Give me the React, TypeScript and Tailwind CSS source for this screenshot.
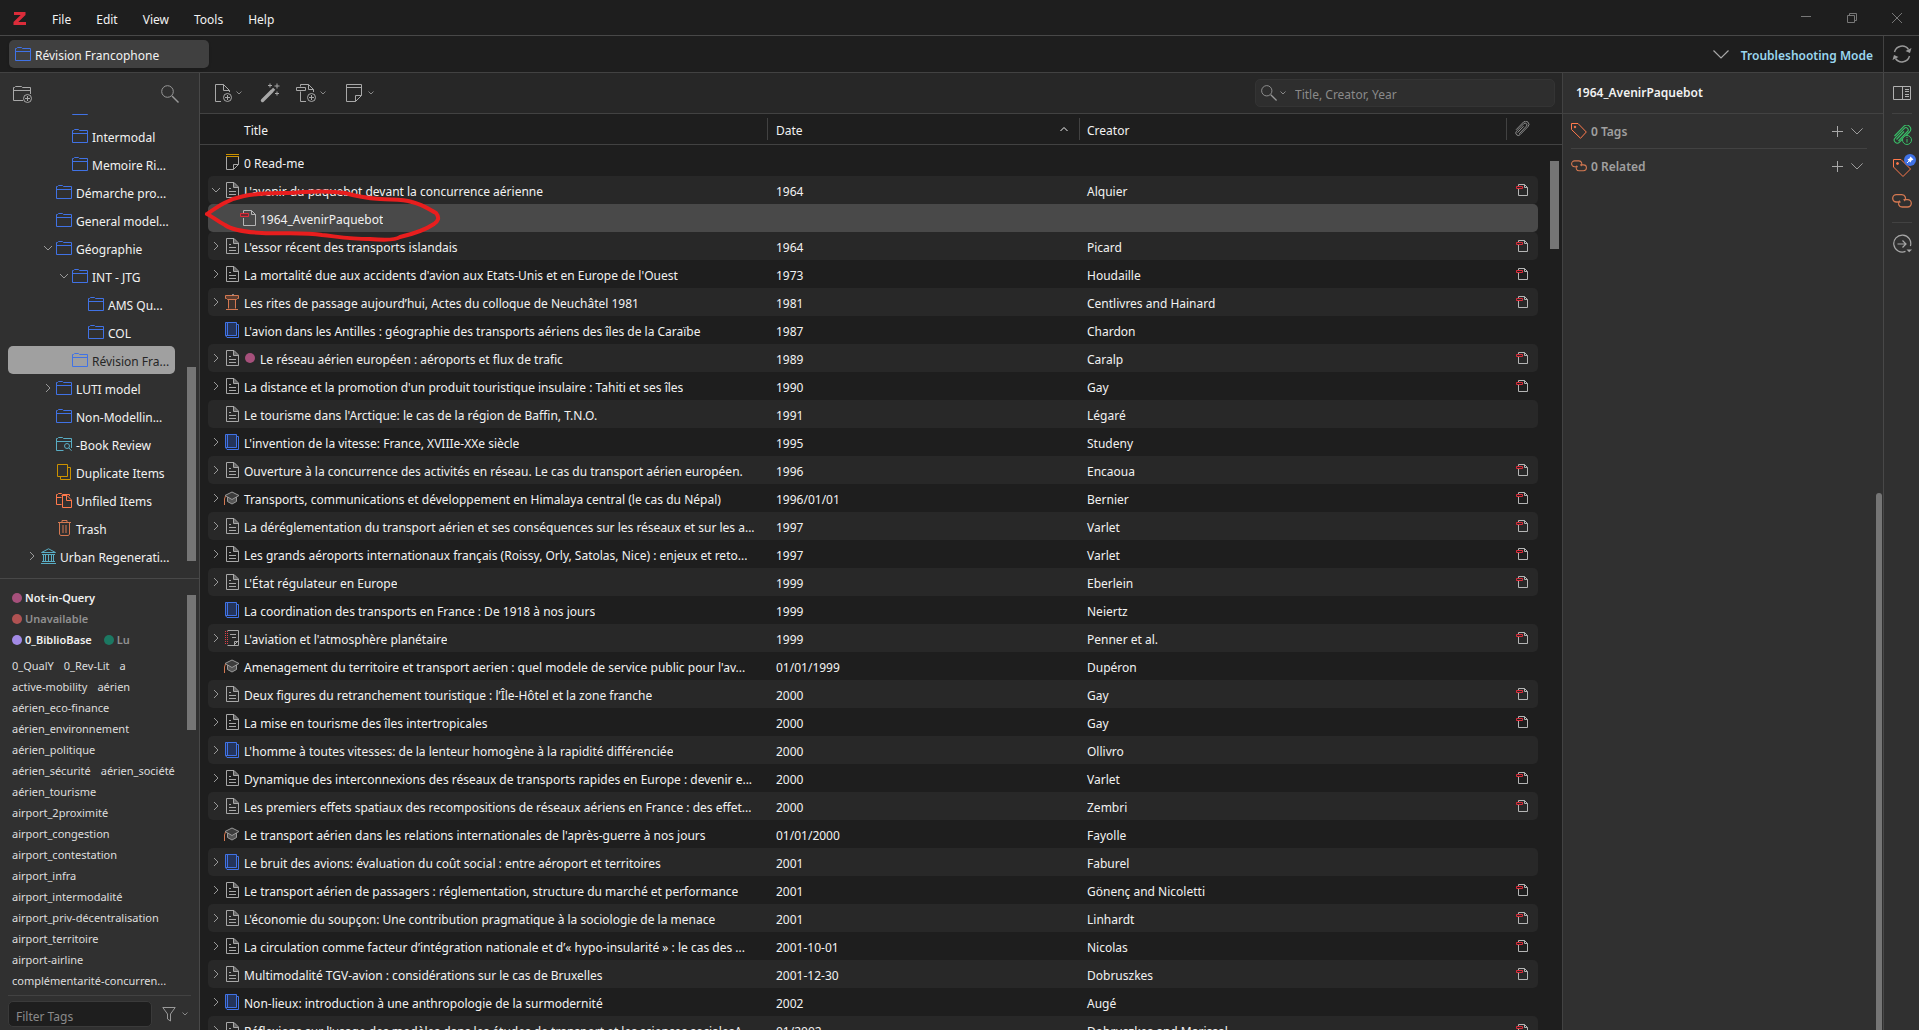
import React, { useState } from "react";
import clsx from "clsx";

type ItemType = "note" | "article" | "pdf" | "conference" | "book" | "thesis" | "report";

interface Item {
  type: ItemType;
  title: string;
  date?: string;
  creator?: string;
  expandable?: boolean;
  pdf?: boolean;
  tagged?: boolean;
}

interface Collection {
  name: string;
  depth: number;
  icon: "folder" | "search" | "duplicate" | "unfiled" | "trash" | "library";
  open?: boolean;
  closed?: boolean;
}

const collections: Collection[] = [
  { name: "Intermodal", depth: 3, icon: "folder" },
  { name: "Memoire Ri...", depth: 3, icon: "folder" },
  { name: "Démarche pro...", depth: 2, icon: "folder" },
  { name: "General model...", depth: 2, icon: "folder" },
  { name: "Géographie", depth: 2, icon: "folder", open: true },
  { name: "INT - JTG", depth: 3, icon: "folder", open: true },
  { name: "AMS Qu...", depth: 4, icon: "folder" },
  { name: "COL", depth: 4, icon: "folder" },
  { name: "Révision Fra...", depth: 3, icon: "folder" },
  { name: "LUTI model", depth: 2, icon: "folder", closed: true },
  { name: "Non-Modellin...", depth: 2, icon: "folder" },
  { name: "-Book Review", depth: 2, icon: "search" },
  { name: "Duplicate Items", depth: 2, icon: "duplicate" },
  { name: "Unfiled Items", depth: 2, icon: "unfiled" },
  { name: "Trash", depth: 2, icon: "trash" },
  { name: "Urban Regenerati...", depth: 1, icon: "library", closed: true },
];

const indents = ["pl-0", "pl-4", "pl-8", "pl-12", "pl-16"];

const items: Item[] = [
  { type: "note", title: "0 Read-me" },
  { type: "article", title: "L'avenir du paquebot devant la concurrence aérienne", date: "1964", creator: "Alquier", pdf: true },
  { type: "pdf", title: "1964_AvenirPaquebot" },
  { type: "article", title: "L'essor récent des transports islandais", date: "1964", creator: "Picard", expandable: true, pdf: true },
  { type: "article", title: "La mortalité due aux accidents d'avion aux Etats-Unis et en Europe de l'Ouest", date: "1973", creator: "Houdaille", expandable: true, pdf: true },
  { type: "conference", title: "Les rites de passage aujourd’hui, Actes du colloque de Neuchâtel 1981", date: "1981", creator: "Centlivres and Hainard", expandable: true, pdf: true },
  { type: "book", title: "L'avion dans les Antilles : géographie des transports aériens des îles de la Caraïbe", date: "1987", creator: "Chardon" },
  { type: "article", title: "Le réseau aérien européen : aéroports et flux de trafic", date: "1989", creator: "Caralp", expandable: true, pdf: true, tagged: true },
  { type: "article", title: "La distance et la promotion d'un produit touristique insulaire : Tahiti et ses îles", date: "1990", creator: "Gay", expandable: true, pdf: true },
  { type: "article", title: "Le tourisme dans l'Arctique: le cas de la région de Baffin, T.N.O.", date: "1991", creator: "Légaré" },
  { type: "book", title: "L'invention de la vitesse: France, XVIIIe-XXe siècle", date: "1995", creator: "Studeny", expandable: true },
  { type: "article", title: "Ouverture à la concurrence des activités en réseau. Le cas du transport aérien européen.", date: "1996", creator: "Encaoua", expandable: true, pdf: true },
  { type: "thesis", title: "Transports, communications et développement en Himalaya central (le cas du Népal)", date: "1996/01/01", creator: "Bernier", expandable: true, pdf: true },
  { type: "article", title: "La déréglementation du transport aérien et ses conséquences sur les réseaux et sur les a...", date: "1997", creator: "Varlet", expandable: true, pdf: true },
  { type: "article", title: "Les grands aéroports internationaux français (Roissy, Orly, Satolas, Nice) : enjeux et reto...", date: "1997", creator: "Varlet", expandable: true, pdf: true },
  { type: "article", title: "L'État régulateur en Europe", date: "1999", creator: "Eberlein", expandable: true, pdf: true },
  { type: "book", title: "La coordination des transports en France : De 1918 à nos jours", date: "1999", creator: "Neiertz" },
  { type: "report", title: "L'aviation et l'atmosphère planétaire", date: "1999", creator: "Penner et al.", expandable: true, pdf: true },
  { type: "thesis", title: "Amenagement du territoire et transport aerien : quel modele de service public pour l'av...", date: "01/01/1999", creator: "Dupéron" },
  { type: "article", title: "Deux figures du retranchement touristique : l’Île-Hôtel et la zone franche", date: "2000", creator: "Gay", expandable: true, pdf: true },
  { type: "article", title: "La mise en tourisme des îles intertropicales", date: "2000", creator: "Gay", expandable: true, pdf: true },
  { type: "book", title: "L'homme à toutes vitesses: de la lenteur homogène à la rapidité différenciée", date: "2000", creator: "Ollivro", expandable: true },
  { type: "article", title: "Dynamique des interconnexions des réseaux de transports rapides en Europe : devenir e...", date: "2000", creator: "Varlet", expandable: true, pdf: true },
  { type: "article", title: "Les premiers effets spatiaux des recompositions de réseaux aériens en France : des effet...", date: "2000", creator: "Zembri", expandable: true, pdf: true },
  { type: "thesis", title: "Le transport aérien dans les relations internationales de l'après-guerre à nos jours", date: "01/01/2000", creator: "Fayolle" },
  { type: "book", title: "Le bruit des avions: évaluation du coût social : entre aéroport et territoires", date: "2001", creator: "Faburel", expandable: true },
  { type: "article", title: "Le transport aérien de passagers : réglementation, structure du marché et performance", date: "2001", creator: "Gönenç and Nicoletti", expandable: true, pdf: true },
  { type: "article", title: "L'économie du soupçon: Une contribution pragmatique à la sociologie de la menace", date: "2001", creator: "Linhardt", expandable: true, pdf: true },
  { type: "article", title: "La circulation comme facteur d’intégration nationale et d’« hypo-insularité » : le cas des ...", date: "2001-10-01", creator: "Nicolas", expandable: true, pdf: true },
  { type: "article", title: "Multimodalité TGV-avion : considérations sur le cas de Bruxelles", date: "2001-12-30", creator: "Dobruszkes", expandable: true, pdf: true },
  { type: "book", title: "Non-lieux: introduction à une anthropologie de la surmodernité", date: "2002", creator: "Augé", expandable: true },
  { type: "article", title: "Réflexions sur l'usage des modèles dans les études de transport et les sciences socialesA...", date: "01/2002", creator: "Dobruszkes and Marissal", expandable: true, pdf: true },
];

const tagRows = [
  ["0_QualY", "0_Rev-Lit", "a"],
  ["active-mobility", "aérien"],
  ["aérien_eco-finance"],
  ["aérien_environnement"],
  ["aérien_politique"],
  ["aérien_sécurité", "aérien_société"],
  ["aérien_tourisme"],
  ["airport_2proximité"],
  ["airport_congestion"],
  ["airport_contestation"],
  ["airport_infra"],
  ["airport_intermodalité"],
  ["airport_priv-décentralisation"],
  ["airport_territoire"],
  ["airport-airline"],
  ["complémentarité-concurren..."],
];

interface IconProps {
  size?: number;
  box?: number;
  className?: string;
  children: React.ReactNode;
}

const Icon = ({ size = 16, box = 16, className, children }: IconProps) => (
  <svg
    width={size}
    height={size}
    viewBox={`0 0 ${box} ${box}`}
    fill="none"
    stroke="currentColor"
    className={clsx("shrink-0", className)}
    aria-hidden="true"
  >
    {children}
  </svg>
);

const FolderIcon = () => (
  <Icon className="text-[#4072e5]">
    <path d="M.5 14.5V2.5H1.5L2.5 1.5H6.5L7.5 2.5H15.5V14.5zM.5 5.5H15.5" />
  </Icon>
);

const CollectionIcon = ({ icon }: { icon: Collection["icon"] }) => {
  if (icon === "search") {
    return (
      <Icon className="text-[#59adc4]">
        <path d="M7.5 14.5H.5V2.5H1.5L2.5 1.5H6.5L7.5 2.5H15.5V12M.5 5.5H15.5" />
        <circle cx="11" cy="10" r="2.5" />
        <path d="M12.8 11.8L15.5 14.8" />
      </Icon>
    );
  }
  if (icon === "duplicate") {
    return (
      <Icon className="text-[#cc9200]">
        <path d="M1.5 .5H11.5V12.5H1.5zM11.5 3.5H14.5V15.5H4.5V12.5" />
      </Icon>
    );
  }
  if (icon === "unfiled") {
    return (
      <Icon className="text-[#ff794c]">
        <path d="M5.5 12.5H.5V2.5H1.5L2.5 1.5H5.5L6.5 2.5H13.5V4M.5 5.5H5.5M5.5 3.5H11L15.5 8V15.5H6.5V3.5M10.5 3.5V8.5H15.5" />
      </Icon>
    );
  }
  if (icon === "trash") {
    return (
      <Icon className="text-[#d47851]">
        <path d="M2 2.5H15M6 2.5V.5H11V2.5M3.5 2.5V14L4.5 15.5H12.5L13.5 14V2.5M7 5V13M10 5V13" />
      </Icon>
    );
  }
  if (icon === "library") {
    return (
      <Icon className="text-[#59adc4]">
        <path d="M1.5 4.5L8.5 .8L15.5 4.5zM2 6.5H15M1 15.5H16M2 13.5H15M3.5 6.5V13.5M5.5 6.5V13.5M8.5 6.5V13.5M11.5 6.5V13.5M13.5 6.5V13.5" />
      </Icon>
    );
  }
  return <FolderIcon />;
};

const ItemIcon = ({ type }: { type: ItemType }) => {
  switch (type) {
    case "note":
      return (
        <Icon className="text-[#a8a8a8]">
          <path d="M2.5 3V15.5H9.5L14.5 10.5V3M9.5 15.5V10.5H14.5" />
          <path d="M2 .5H15M2 2.5H15" stroke="#cc9200" />
        </Icon>
      );
    case "conference":
      return (
        <Icon className="text-[#d47851]">
          <path d="M1.5 1.5H14.5V4.5H13.5L12.5 5.5H3.5L2.5 4.5H1.5z" fill="#5c3d30" />
          <path d="M4.5 5.5V14.5M11.5 5.5V14.5M2 15.5H14" />
          <path d="M5 6H11V15H5z" fill="#3f322d" stroke="none" />
          <path d="M8 1L10 0" stroke="#a8a8a8" />
        </Icon>
      );
    case "book":
      return (
        <Icon className="text-[#4072e5]">
          <path d="M1.5 .5H12.5V13.5H1.5z" fill="#24345a" />
          <path d="M3.5 .5V13.5M1.5 13.5L3 15.5H14.5V2.5H13" />
        </Icon>
      );
    case "thesis":
      return (
        <Icon className="text-[#999999]">
          <path d="M3.5 7V11.5L8 14L12.5 11.5V7" fill="#555555" />
          <path d="M1 5.5L8 2L15 5.5L8 9.5z" fill="#3c3c3c" />
          <path d="M.5 15V9L1.5 6" stroke="#d47851" />
        </Icon>
      );
    case "report":
      return (
        <Icon className="text-[#a8a8a8]">
          <path d="M3.5 .5H14.5V15.5H3.5M10.5 15V11.5H14M6 4.5H12M8 7.5H12" />
          <path d="M10 15L14 11" />
          <path d="M1.5 1V15M3.5 1V15" stroke="#db4048" strokeDasharray="1 1" />
        </Icon>
      );
    case "pdf":
      return (
        <Icon className="text-[#b5b5b5]">
          <path d="M3.5 3V.5H11.5L15.5 4.5V15.5H3.5V8M11.5 .5V4.5H15.5" />
          <path d="M.5 3.5H8.5V6.5H.5z" stroke="#db2c3a" fill="#6b2a30" />
        </Icon>
      );
    default:
      return (
        <Icon className="text-[#a8a8a8]">
          <path d="M10 .5V5.5H14.5z" fill="#666666" stroke="none" />
          <path d="M2.5 .5H10L14.5 5V15.5H2.5zM9.5 .5V5.5H14.5M5 6.5H7M5 9.5H12M5 12.5H12" />
        </Icon>
      );
  }
};

const PdfBadge = () => (
  <Icon size={12} box={12} className="text-[#b5b5b5]">
    <path d="M2.5 2V.5H8.5L11.5 3.5V11.5H2.5V5M8.5 .5V3.5H11.5" />
    <path d="M.5 2.5H6.5V4.5H.5z" stroke="#db2c3a" />
  </Icon>
);

const Chevron = ({ dir, className }: { dir: "right" | "down" | "up"; className?: string }) => (
  <Icon size={8} box={8} className={className}>
    {dir === "right" && <path d="M2 0L6 4L2 8" />}
    {dir === "down" && <path d="M0 2L4 6L8 2" />}
    {dir === "up" && <path d="M.5 6L4 2.5L7.5 6" />}
  </Icon>
);

const SmallChevron = () => (
  <Icon size={6} box={6} className="text-[#888888]">
    <path d="M.5 1.5L3 4L5.5 1.5" />
  </Icon>
);

const BigChevron = ({ size }: { size: number }) => (
  <Icon size={size} box={16} className="text-[#a8a8a8]">
    <path d="M.5 4.5L8 12L15.5 4.5" strokeWidth="1.2" />
  </Icon>
);

const Magnifier = ({ size }: { size: number }) => (
  <Icon size={size} box={18} className="text-[#999999]">
    <circle cx="6.5" cy="6.5" r="5.8" />
    <path d="M11 11L17.5 17.5" strokeWidth="1.4" />
  </Icon>
);

const TagIcon = ({ size }: { size: number }) => (
  <Icon size={size} className="text-[#ff794c]">
    <path d="M.5 .5H7L15.3 9L9.5 15.3L.5 6.5z" />
    <circle cx="4" cy="4" r=".8" fill="currentColor" />
  </Icon>
);

const LinkIcon = ({ size }: { size: number }) => (
  <Icon size={size} box={20} className="text-[#d47851]">
    <path
      d="M8.5 11H4.4A3.7 3.7 0 0 1 4.4 3.6H9.8A3.7 3.7 0 0 1 12.4 10M11.5 8.6H15.6A3.7 3.7 0 0 1 15.6 16H10.2A3.7 3.7 0 0 1 7.6 9.6"
      strokeWidth="1.3"
    />
  </Icon>
);

const PaperclipPath = "M4.5 14.5L12 6.5M6.5 16L15.5 6.5A2.2 2.2 0 0 0 12.3 3.3L3.2 12.8A3 3 0 0 0 7.5 17.2L17.5 7A4 4 0 0 0 12 1.2L2.5 11";

const TitleBar = () => (
  <header className="flex h-9 shrink-0 items-center border-b border-[#484848] pl-3">
    <Icon className="text-[#db2c3a]">
      <path d="M2 2H13.5V5L6.3 12H14V15H1.5V12L8.7 5H2z" fill="currentColor" stroke="none" />
    </Icon>
    <nav className="flex gap-[25px] pl-6 pt-1">
      {["File", "Edit", "View", "Tools", "Help"].map((label) => (
        <button key={label} className="leading-5">
          {label}
        </button>
      ))}
    </nav>
    <div className="ml-auto flex text-[#777777]">
      <button aria-label="Minimize" className="flex w-[46px] justify-center">
        <Icon size={10} box={10}>
          <path d="M0 3.5H10" />
        </Icon>
      </button>
      <button aria-label="Restore" className="flex w-[46px] justify-center">
        <Icon size={10} box={10}>
          <path d="M.5 2.5H7.5V9.5H.5zM2.5 2.5V.5H9.5V7.5H7.5" />
        </Icon>
      </button>
      <button aria-label="Close" className="flex w-11 justify-center">
        <Icon size={10} box={10}>
          <path d="M0 0L10 10M10 0L0 10" />
        </Icon>
      </button>
    </div>
  </header>
);

const TabBar = () => (
  <div className="flex h-[37px] shrink-0 items-center border-b border-[#424242]">
    <button className="ml-[9px] flex h-7 w-[200px] items-center gap-1 rounded-[5px] bg-[#404040] pl-1.5 shadow">
      <FolderIcon />
      <span className="pt-1">Révision Francophone</span>
    </button>
    <div className="ml-auto flex h-full items-center">
      <button aria-label="List all tabs" className="mr-3">
        <BigChevron size={16} />
      </button>
      <a href="#troubleshooting" className="mr-2.5 pt-1 font-semibold text-[#9ad6ee]">
        Troubleshooting Mode
      </a>
      <button
        aria-label="Sync"
        className="flex h-full w-9 items-center justify-center border-l border-[#424242]"
      >
        <Icon size={20} box={20} className="text-[#999999]">
          <path d="M2.5 8A7.8 7.8 0 0 1 16.5 5.5M17.5 12A7.8 7.8 0 0 1 3.5 14.5" strokeWidth="1.4" />
          <path d="M19.5 4L18 9L13.5 7zM.5 16L2 11L6.5 13z" fill="currentColor" stroke="none" />
        </Icon>
      </button>
    </div>
  </div>
);

const CollectionTree = () => {
  const [selected, setSelected] = useState<string>("Révision Fra...");

  return (
    <div className="relative flex shrink-0 flex-col pb-2 pl-2">
      <div className="flex h-2 w-full flex-col justify-end overflow-hidden">
        <div className="flex h-7 shrink-0 items-center pl-16">
          <FolderIcon />
        </div>
      </div>
      {collections.map((collection) => (
        <button
          key={collection.name}
          onClick={() => setSelected(collection.name)}
          className={clsx(
            "flex h-7 w-[167px] items-center whitespace-nowrap rounded-[5px] text-left",
            indents[collection.depth],
            selected === collection.name && "bg-[#a0a0a0] text-[#262626]"
          )}
        >
          <span className="flex w-4 shrink-0 justify-center text-[#999999]">
            {collection.open && <Chevron dir="down" />}
            {collection.closed && <Chevron dir="right" />}
          </span>
          <CollectionIcon icon={collection.icon} />
          <span className="pl-1 pt-1">{collection.name}</span>
        </button>
      ))}
      <div className="absolute right-[3px] top-[253px] h-[194px] w-[9px] bg-[#757575]" />
    </div>
  );
};

const Dot = ({ className }: { className: string }) => (
  <span className={clsx("mr-[3px] size-2.5 shrink-0 rounded-full", className)} />
);

const TagSelector = () => (
  <section className="relative flex min-h-0 flex-1 flex-col border-t border-[#484848]">
    <div className="min-h-0 flex-1 overflow-hidden whitespace-nowrap pl-3 pt-2 text-[11px] leading-[21px]">
      <button className="flex items-center font-semibold">
        <Dot className="bg-[#a6507b]" />
        Not-in-Query
      </button>
      <button className="flex items-center font-semibold text-[#909090]">
        <Dot className="bg-[#b05252]" />
        Unavailable
      </button>
      <div className="flex gap-3">
        <button className="flex items-center font-semibold">
          <Dot className="bg-[#a28ae5]" />
          0_BiblioBase
        </button>
        <button className="flex items-center font-semibold text-[#909090]">
          <Dot className="bg-[#1c7862]" />
          Lu
        </button>
      </div>
      <div className="pt-[5px] text-[#dedede]">
        {tagRows.map((row) => (
          <div key={row[0]} className="flex gap-2.5">
            {row.map((tag) => (
              <button key={tag}>{tag}</button>
            ))}
          </div>
        ))}
      </div>
    </div>
    <div className="absolute right-[3px] top-4 h-[135px] w-[9px] bg-[#757575]" />
    <div className="mx-2 flex h-[35px] shrink-0 items-center border-t border-[#424242] pt-0.5">
      <input
        aria-label="Filter Tags"
        placeholder="Filter Tags"
        className="h-[26px] w-36 rounded-[5px] border border-[#3a3a3a] bg-[#1e1e1e] px-[7px] pt-1 outline-none placeholder:text-[#8a8a8a]"
      />
      <button aria-label="Filter options" className="ml-2.5 flex items-center gap-1">
        <Icon className="text-[#999999]">
          <path d="M.8 1.5H13.2L8.5 8V15L5.5 13V8z" />
        </Icon>
        <SmallChevron />
      </button>
    </div>
  </section>
);

const Sidebar = () => (
  <aside className="flex w-[200px] shrink-0 flex-col overflow-hidden border-r border-[#484848] bg-[#303030]">
    <div className="flex h-[41px] shrink-0 items-center justify-between pl-3 pr-5">
      <button aria-label="New Collection">
        <Icon size={20} box={20} className="text-[#a8a8a8]">
          <path d="M11 16.5H1.5V3.5H2.5L3.5 2.5H9.5L10.5 3.5H18.5V10M1.5 6.5H18.5" />
          <circle cx="15.5" cy="14.5" r="4" />
          <path d="M13 14.5H18M15.5 12V17" />
        </Icon>
      </button>
      <button aria-label="Filter Collections">
        <Magnifier size={18} />
      </button>
    </div>
    <CollectionTree />
    <TagSelector />
  </aside>
);

const Toolbar = () => (
  <div className="flex h-[41px] shrink-0 items-center border-b border-[#424242] bg-[#272727] pl-3 pr-[7px] text-[#a8a8a8]">
    <button aria-label="New Item" className="flex items-center gap-1">
      <Icon size={20} box={20}>
        <path d="M9 18.5H3.5V1.5H11.5L17.5 7.5V9M11.5 1.5V7.5H17.5" />
        <circle cx="15.5" cy="14.5" r="4" />
        <path d="M13 14.5H18M15.5 12V17" />
      </Icon>
      <SmallChevron />
    </button>
    <button aria-label="Add Item by Identifier" className="ml-[18px]">
      <Icon size={20} box={20}>
        <path d="M2.5 17.5L12 8" strokeWidth="3.4" strokeLinecap="round" />
        <path d="M12.6 7.4L14.2 5.8" strokeWidth="3" />
        <path d="M10 .5V4.5M8 2.5H12M17 .5V5.5M14.5 3H19.5M17 8.5V12.5M15 10.5H19" />
      </Icon>
    </button>
    <button aria-label="Add Attachment" className="ml-4 flex items-center gap-1">
      <Icon size={20} box={20}>
        <path d="M4.5 3.5V1.5H12.5L17.5 6.5V9M12.5 1.5V6.5H17.5M4.5 8.5V18.5H10M.5 4.5H9.5V7.5H.5z" />
        <circle cx="15.5" cy="14.5" r="4" />
        <path d="M13 14.5H18M15.5 12V17" />
      </Icon>
      <SmallChevron />
    </button>
    <button aria-label="New Note" className="ml-[18px] flex items-center gap-1">
      <Icon size={20} box={20}>
        <path d="M2.5 1.5H17.5V12.5L11.5 18.5H2.5zM2.5 4.5H17.5M11.5 18.5V12.5H17.5" />
      </Icon>
      <SmallChevron />
    </button>
    <div className="ml-auto flex h-7 w-[300px] items-center rounded-[5px] border border-[#343434] bg-[#2e2e2e] pl-[5px]">
      <button aria-label="Search mode" className="flex items-center gap-[3px]">
        <Magnifier size={16} />
        <SmallChevron />
      </button>
      <input
        aria-label="Search items"
        placeholder="Title, Creator, Year"
        className="ml-[9px] min-w-0 flex-1 bg-transparent pt-1 outline-none placeholder:text-[#8a8a8a]"
      />
    </div>
  </div>
);

const ItemRow = ({ item, index, selected, onSelect }: { item: Item; index: number; selected: boolean; onSelect: () => void }) => {
  const cell = clsx(
    "flex h-7 items-center overflow-hidden whitespace-nowrap",
    selected ? "bg-[#494949]" : index % 2 === 1 && "bg-[#282828]"
  );

  return (
    <tr onClick={onSelect}>
      <td className="p-0 pl-2">
        <div className={clsx(cell, "rounded-l-[5px]")}>
          <span className={clsx("flex shrink-0 justify-center text-[#999999]", item.type === "pdf" ? "w-8" : "w-4")}>
            {index === 1 && <Chevron dir="down" />}
            {item.expandable && <Chevron dir="right" />}
          </span>
          <ItemIcon type={item.type} />
          {item.tagged && <span className="ml-[5px] mr-px size-2.5 shrink-0 rounded-full bg-[#a6507b]" />}
          <span className="truncate pl-1 pt-1">{item.title}</span>
        </div>
      </td>
      <td className="p-0">
        <div className={cell}>
          <span className="pl-[9px] pt-1">{item.date}</span>
        </div>
      </td>
      <td className="p-0">
        <div className={cell}>
          <span className="pl-2 pt-1">{item.creator}</span>
        </div>
      </td>
      <td className="p-0 pr-6">
        <div className={clsx(cell, "rounded-r-[5px] pl-2.5")}>{item.pdf && <PdfBadge />}</div>
      </td>
    </tr>
  );
};

const ItemTable = () => {
  const [selected, setSelected] = useState<number>(2);
  const heading = "h-[31px] border-b border-[#424242] p-0 text-left font-normal";
  const divider = "flex h-[22px] items-center border-l border-[#424242]";

  return (
    <div className="relative min-h-0 flex-1 overflow-hidden">
      <table className="w-full table-fixed border-separate border-spacing-0">
        <colgroup>
          <col />
          <col className="w-[312px]" />
          <col className="w-[427px]" />
          <col className="w-14" />
        </colgroup>
        <thead>
          <tr>
            <th className={clsx(heading, "pl-11")}>
              <div className="flex h-[22px] items-center">
                <span className="pt-1">Title</span>
              </div>
            </th>
            <th className={heading}>
              <div className={clsx(divider, "justify-between pl-2 pr-[11px]")}>
                <span className="pt-1">Date</span>
                <Chevron dir="up" />
              </div>
            </th>
            <th className={heading}>
              <div className={clsx(divider, "pl-[7px]")}>
                <span className="pt-1">Creator</span>
              </div>
            </th>
            <th className={heading} aria-label="Attachments">
              <div className={clsx(divider, "pl-[7px]")}>
                <Icon box={20} className="text-[#a8a8a8]">
                  <path d={PaperclipPath} />
                </Icon>
              </div>
            </th>
          </tr>
        </thead>
        <tbody className="before:block before:h-[3px] before:content-['']">
          {items.map((item, index) => (
            <ItemRow
              key={index}
              item={item}
              index={index}
              selected={selected === index}
              onSelect={() => setSelected(index)}
            />
          ))}
        </tbody>
      </table>
      <div className="absolute right-[3px] top-[47px] h-[88px] w-[9px] bg-[#757575]" />
    </div>
  );
};

const PaneSection = ({ icon, label }: { icon: React.ReactNode; label: string }) => (
  <div className="flex h-[34px] items-center gap-1">
    {icon}
    <span className="pt-0.5 font-semibold text-[#a0a0a0]">{label}</span>
    <button aria-label={`Add ${label}`} className="ml-auto">
      <Icon size={11} box={11} className="text-[#a8a8a8]">
        <path d="M5.5 0V11M0 5.5H11" />
      </Icon>
    </button>
    <button aria-label={`Expand ${label}`} className="ml-1 mr-1">
      <BigChevron size={12} />
    </button>
  </div>
);

const ItemPane = () => (
  <aside className="relative w-[321px] shrink-0 border-l border-[#424242] bg-[#303030]">
    <h2 className="flex h-[41px] items-center border-b border-[#424242] pl-[13px] font-semibold">
      1964_AvenirPaquebot
    </h2>
    <div className="pl-2 pr-4">
      <div className="border-b border-[#424242]">
        <PaneSection icon={<TagIcon size={16} />} label="0 Tags" />
      </div>
      <PaneSection icon={<LinkIcon size={16} />} label="0 Related" />
    </div>
    <div className="absolute bottom-0 right-px top-[420px] w-1.5 rounded-t-sm bg-[#757575]" />
  </aside>
);

const SideNav = () => (
  <nav className="flex w-9 shrink-0 flex-col items-center border-l border-[#484848] bg-[#303030]">
    <div className="flex h-[41px] w-5 items-center justify-center border-b border-[#424242]">
      <button aria-label="Toggle item pane">
        <Icon size={20} box={20} className="text-[#b0b0b0]">
          <path d="M1.5 3.5H18.5V16.5H1.5zM10.5 3.5V16.5M13 6.5H17M13 8.5H17M13 11.5H17M13 13.5H17" />
        </Icon>
      </button>
    </div>
    <div className="flex flex-col items-center gap-[13px] border-b border-[#424242] py-[11px]">
      <button aria-label="Attachment info">
        <Icon size={20} box={20} className="text-[#39bf68]">
          <path d={PaperclipPath} strokeWidth="1.1" />
          <circle cx="15" cy="15" r="4.5" fill="#303030" />
          <path d="M15 14V17.5M15 12V13" />
        </Icon>
      </button>
      <button aria-label="Tags" className="relative">
        <Icon size={20} box={20} className="text-[#ff794c]">
          <path d="M1.5 1.5H9L18.5 11L11 18.5L1.5 9z" />
          <circle cx="5.5" cy="5.5" r="1" fill="currentColor" />
        </Icon>
        <span className="absolute -right-1 -top-1 flex size-3 items-center justify-center rounded-full bg-[#4072e5] text-white">
          <Icon size={8} box={8}>
            <path d="M4.5 .5L7.5 3.5L5.5 4.5L4.5 6.5L1.5 3.5L3.5 2.5z" fill="currentColor" stroke="none" />
            <path d="M3 5L1 7" />
          </Icon>
        </span>
      </button>
      <button aria-label="Related">
        <LinkIcon size={20} />
      </button>
    </div>
    <button aria-label="Locate" className="mt-[11px]">
      <Icon size={20} box={20} className="text-[#a8a8a8]">
        <path d="M13.5 17.4A8.5 8.5 0 1 1 18.4 12M5.5 10H14M10.5 6.5L14 10L10.5 13.5" strokeWidth="1.2" />
        <path d="M14.5 15.5H20L17.2 18.3z" fill="currentColor" stroke="none" />
      </Icon>
    </button>
  </nav>
);

/* Hand-drawn loop round the selected attachment */
const Highlight = () => (
  <svg
    className="pointer-events-none absolute left-0.5 top-[111px] text-[#e81e1e]"
    width="240"
    height="64"
    viewBox="202 184 240 64"
    fill="none"
    stroke="currentColor"
    strokeWidth="4"
    strokeLinecap="round"
    strokeLinejoin="round"
    aria-hidden="true"
  >
    <path d="M207 214C217 207 228 199 244 196C262 192 285 194 304 192C320 191 332 191 345 193C355 196 366 198 380 199C392 200 402 199 412 202C424 205 430 210 436 213C440 218 438 221 434 224C425 230 413 234 400 237C396 240 382 240 370 239C350 239 340 237 322 235C304 232 285 234 262 233C245 232 232 230 225 225C217 221 213 217 207 214z" />
  </svg>
);

export default function App() {
  return (
    <div className="flex h-screen flex-col overflow-hidden bg-[#1e1e1e] font-['Noto_Sans','Open_Sans',sans-serif] text-[12px] leading-5 text-[#f2f2f2]">
      <TitleBar />
      <TabBar />
      <div className="flex min-h-0 flex-1">
        <Sidebar />
        <main className="relative flex min-w-0 flex-1 flex-col">
          <Toolbar />
          <ItemTable />
          <Highlight />
        </main>
        <ItemPane />
        <SideNav />
      </div>
    </div>
  );
}
